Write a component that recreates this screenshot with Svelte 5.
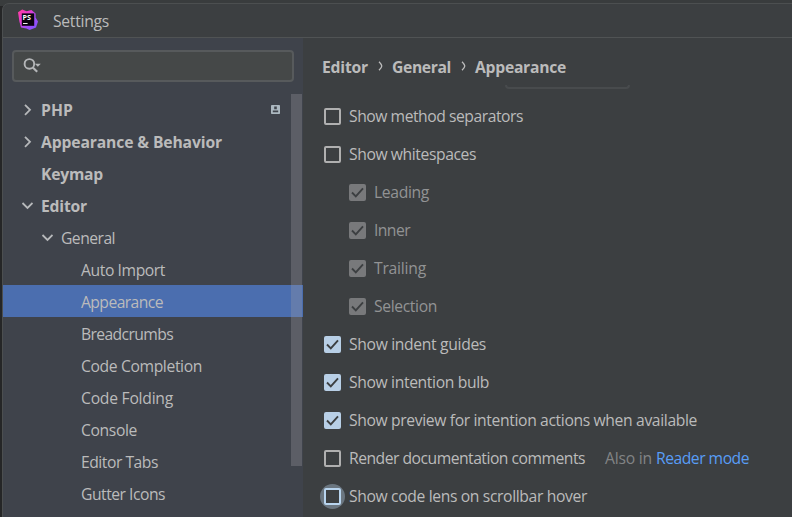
<script>
  const tree = [
    { label: 'PHP', level: 0, arrow: 'right', w: 32, badge: true },
    { label: 'Appearance & Behavior', level: 0, arrow: 'right', w: 181 },
    { label: 'Keymap', level: 0, w: 62 },
    { label: 'Editor', level: 0, arrow: 'down', w: 46 },
    { label: 'General', level: 1, arrow: 'down', w: 54 },
    { label: 'Auto Import', level: 2, w: 84 },
    { label: 'Appearance', level: 2, w: 82, selected: true },
    { label: 'Breadcrumbs', level: 2, w: 92 },
    { label: 'Code Completion', level: 2, w: 121 },
    { label: 'Code Folding', level: 2, w: 92 },
    { label: 'Console', level: 2, w: 56 },
    { label: 'Editor Tabs', level: 2, w: 77 },
    { label: 'Gutter Icons', level: 2, w: 84 }
  ];
  const crumbs = [
    { label: 'Editor', w: 46 },
    { label: 'General', w: 59 },
    { label: 'Appearance', w: 91 }
  ];
  const options = [
    { label: 'Show method separators', w: 174 },
    { label: 'Show whitespaces', w: 127 },
    { label: 'Leading', w: 55, checked: true, disabled: true },
    { label: 'Inner', w: 36, checked: true, disabled: true },
    { label: 'Trailing', w: 52, checked: true, disabled: true },
    { label: 'Selection', w: 63, checked: true, disabled: true },
    { label: 'Show indent guides', w: 137, checked: true },
    { label: 'Show intention bulb', w: 140, checked: true },
    { label: 'Show preview for intention actions when available', w: 348, checked: true },
    { label: 'Render documentation comments', w: 236, reader: true },
    { label: 'Show code lens on scrollbar hover', w: 238, focused: true }
  ];

  // Tracks each label out to its nominal width, whichever face is installed.
  function fit(node, width) {
    const natural = node.getBoundingClientRect().width;
    node.style.letterSpacing = `${(width - natural) / node.textContent.length}px`;
  }
</script>

<div class="desktop">
  <div class="window">
    <header>
      <svg class="logo" width="22" height="22" viewBox="0 0 22 22">
        <defs>
          <linearGradient id="edge" x1="0" y1="0" x2="1" y2="1">
            <stop offset="0" stop-color="#ff3f9c" />
            <stop offset=".35" stop-color="#e83bd0" />
            <stop offset=".6" stop-color="#a44cf5" />
            <stop offset="1" stop-color="#7a54ff" />
          </linearGradient>
        </defs>
        <path d="M1 3.2 5.2.6 9.6 2.2 14.4 1 18.6 4.6 18.6 8.6 21 12.4 19 18.4 12.6 21 9.4 19.6 4 18.4 2.4 12.4Z" fill="url(#edge)" />
        <rect x="4.8" y="4.4" width="12.4" height="12.4" fill="#0b0410" />
        <text x="5.6" y="10.8" font-size="7" textLength="8.4" lengthAdjust="spacingAndGlyphs">PS</text>
        <path d="M6 14.5h4.6" stroke="#eee" stroke-width="1" />
      </svg>
      <span class="title" use:fit={56}>Settings</span>
    </header>

    <div class="body">
      <aside>
        <div class="search">
          <svg width="20" height="18" viewBox="0 0 20 18" fill="none">
            <circle cx="6.4" cy="6.9" r="4.8" stroke="#b4b6b8" stroke-width="1.9" />
            <path d="m9.8 10.4 4.4 4.4" stroke="#b4b6b8" stroke-width="2.1" />
            <path d="M11.8 6.8h6l-3 3z" fill="#b4b6b8" />
          </svg>
        </div>
        <div class="tree">
          {#each tree as item}
            <div class="node level{item.level}" class:selected={item.selected}>
              <span class="arrow">
                {#if item.arrow}
                  <svg width="12" height="12" viewBox="0 0 12 12" fill="none" stroke="#b6b8ba" stroke-width="1.8">
                    <path d={item.arrow === 'right' ? 'M4 .8 9 5.8l-5 5' : 'm1.5 3 5 5 5-5'} />
                  </svg>
                {/if}
              </span>
              <span class="label" use:fit={item.w}>{item.label}</span>
              {#if item.badge}
                <svg class="badge" width="9" height="9" viewBox="0 0 9 9">
                  <rect width="9" height="9" rx=".8" fill="#acb8c0" />
                  <path d="M3.2 1.6h2.6v2.6H3.2zM1.8 5.4h5.4v1.8H1.8z" fill="#40454d" />
                </svg>
              {/if}
            </div>
          {/each}
          <div class="thumb"></div>
        </div>
      </aside>

      <main>
        <nav>
          {#each crumbs as crumb, i}
            {#if i > 0}
              <svg width="5" height="10" viewBox="0 0 5 10" fill="none" stroke="#bbb" stroke-width="1.3">
                <path d="M1 .8q2.8 2.8 2.8 4.2T1 9.2" />
              </svg>
            {/if}
            <span use:fit={crumb.w}>{crumb.label}</span>
          {/each}
        </nav>
        <div class="clip"><div class="field"></div></div>
        <div class="options">
          {#each options as option}
            <div class="option" class:disabled={option.disabled}>
              <span class="box" class:checked={option.checked} class:focused={option.focused}>
                {#if option.checked}
                  <svg width="17" height="17" viewBox="0 0 17 17" fill="none">
                    <path d="m3 8.5 3.8 3.8 7.2-8" stroke="#3c3f41" stroke-width="1.9" />
                  </svg>
                {/if}
              </span>
              <span class="label" use:fit={option.w}>{option.label}</span>
              {#if option.reader}
                <span class="also" use:fit={47}>Also in</span>
                <span class="link" use:fit={93}>Reader mode</span>
              {/if}
            </div>
          {/each}
        </div>
      </main>
    </div>
  </div>
</div>

<style>
  :global(body) { margin: 0; background: #292a2b; }
  .desktop {
    box-sizing: border-box;
    width: 792px;
    height: 517px;
    padding: 3px 0 0 2px;
    overflow: hidden;
    background: linear-gradient(#393c3d 6px, #252627 6px);
    font: 15.7px/22px 'Open Sans', 'Noto Sans', sans-serif;
    color: #bbb;
    white-space: nowrap;
  }
  .window {
    box-sizing: border-box;
    width: 800px;
    height: 524px;
    border: 1px solid #4c4f50;
    border-radius: 7px 0 0 0;
    background: #3c3f41;
    overflow: hidden;
  }
  span { display: inline-block; flex: none; }
  svg { display: block; flex: none; }
  header {
    display: flex;
    align-items: center;
    height: 33px;
    padding-left: 14px;
    border-bottom: 1px solid #505354;
  }
  .logo { margin: 0 14px 1px 0; }
  .logo text { font-family: 'Open Sans', sans-serif; font-weight: 700; fill: #fff; }
  .body { display: flex; height: 484px; }
  aside { flex: none; width: 300px; background: #3f434b; }
  .search {
    box-sizing: border-box;
    display: flex;
    align-items: center;
    width: 282px;
    height: 32px;
    margin: 12px 0 0 9px;
    padding-left: 9px;
    border: 2px solid #575a5c;
    border-radius: 4px;
    background: #454848;
  }
  .tree { position: relative; padding-top: 11px; }
  .node {
    box-sizing: border-box;
    display: flex;
    align-items: center;
    height: 32px;
    padding: 2px 0 0 18px;
  }
  .level0 { font-weight: 700; }
  .level1 { padding-left: 38px; }
  .level2 { padding-left: 58px; }
  .selected { background: #4b6eaf; }
  .arrow { width: 20px; }
  .badge { margin: 0 23px 1px auto; }
  .thumb {
    position: absolute;
    top: 12px;
    right: 1px;
    width: 11px;
    height: 372px;
    background: rgba(158, 160, 166, .3);
  }
  main { flex: 1; }
  nav {
    display: flex;
    align-items: center;
    height: 22px;
    padding: 18px 0 0 19px;
    font-weight: 700;
  }
  nav svg { margin: 0 9px 2px 10px; }
  .clip { height: 7px; padding: 7px 0 0 202px; }
  .field {
    box-sizing: border-box;
    width: 125px;
    height: 4px;
    border: 2px solid #484b4d;
    border-top: 0;
    border-radius: 0 0 4px 4px;
  }
  .options { padding: 5px 0 0 21px; }
  .option { display: flex; align-items: center; height: 38px; }
  .disabled { padding-left: 25px; color: #929394; }
  .box {
    box-sizing: border-box;
    width: 17px;
    height: 17px;
    margin-right: 8px;
    border: 2px solid #b0b0b0;
    border-radius: 2px;
  }
  .box svg { margin: -2px; }
  .checked { background: #b8cfe6; border-color: #b8cfe6; }
  .disabled .checked { background: #78797b; border-color: #78797b; }
  .focused { position: relative; z-index: 0; border-color: #b8d4ee; background: #3c3f41; }
  .focused::before {
    content: '';
    position: absolute;
    z-index: -1;
    inset: -6px;
    border-radius: 50%;
    background: #6b7680;
  }
  .focused::after {
    content: '';
    position: absolute;
    z-index: -1;
    inset: -2px;
    border: 2px solid #b8d4ee;
    border-radius: 2px;
    background: #3c3f41;
  }
  .also { margin-left: 20px; color: #828485; }
  .link { margin-left: 4px; color: #589df6; }
</style>
